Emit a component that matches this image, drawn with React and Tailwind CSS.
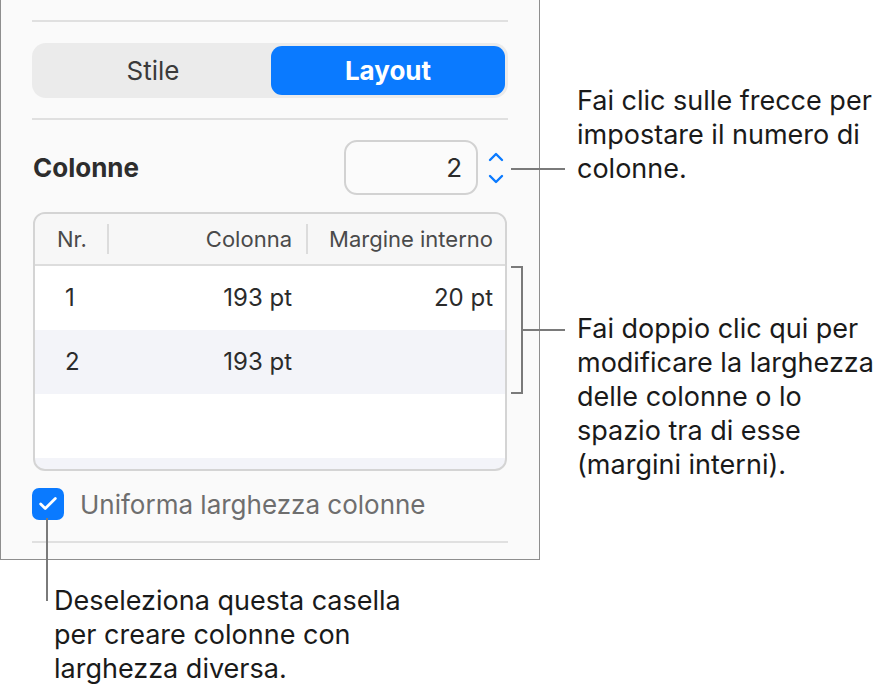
import { Check } from "lucide-react";

const font = { fontFamily: "Inter, 'Noto Sans', sans-serif" };

function Divider() {
  return <div className="h-[2px] bg-[#e0e0e0]" />;
}

function Stepper() {
  return (
    <svg width="18" height="40" viewBox="0 0 18 40" className="ml-[9px]">
      <path d="M3 12 L9 6 L15 12" fill="none" stroke="#0a7aff" strokeWidth="2.4" strokeLinecap="round" strokeLinejoin="round" />
      <path d="M3 28 L9 34 L15 28" fill="none" stroke="#0a7aff" strokeWidth="2.4" strokeLinecap="round" strokeLinejoin="round" />
    </svg>
  );
}

const rows = [
  { nr: "1", col: "193 pt", gap: "20 pt", bg: "bg-white" },
  { nr: "2", col: "193 pt", gap: "", bg: "bg-[#f3f4f9]" },
  { nr: "", col: "", gap: "", bg: "bg-white" },
];

function Panel() {
  return (
    <div className="w-[540px] h-[560px] shrink-0 border border-[#8e8e8e] border-t-0 bg-[#fafafa] pl-[31px] pr-[31px] pt-[20px]">
      <Divider />
      <div className="mt-[21px] h-[55px] rounded-[14px] bg-[#ebebeb] flex items-center p-[3px]">
        <div className="flex-1 text-center text-[26px] text-[#3a3a3a]">Stile</div>
        <div className="w-[234px] h-full rounded-[11px] bg-[#0a7aff] flex items-center justify-center text-[26px] font-bold text-white">
          Layout
        </div>
      </div>
      <div className="mt-[20px]">
        <Divider />
      </div>
      <div className="mt-[20px] flex items-center pr-[3px]">
        <div className="flex-1 pl-[1px] text-[26px] font-bold text-[#2d2d2d]">Colonne</div>
        <div className="w-[134px] h-[55px] rounded-[13px] border-2 border-[#d2d2d2] bg-[#fbfbfb] flex items-center justify-end pr-[14px] text-[26px] text-[#2b2b2b]">
          2
        </div>
        <Stepper />
      </div>
      <div className="mt-[17px] ml-[1px] mr-[1px] h-[259px] rounded-[12px] border-2 border-[#d4d4d4] overflow-hidden bg-[#f3f4f9] flex flex-col">
        <div className="h-[52px] shrink-0 bg-[#f7f7f7] border-b-2 border-[#dddddd] flex items-center text-[22px] text-[#4a4a4a]">
          <div className="w-[74px] pl-[22px] border-r-2 border-[#dcdcdc] h-[30px] flex items-center">Nr.</div>
          <div className="w-[199px] pr-[14px] border-r-2 border-[#dcdcdc] h-[30px] flex items-center justify-end">Colonna</div>
          <div className="flex-1 pr-[12px] text-right">Margine interno</div>
        </div>
        {rows.map((r, i) => (
          <div key={i} className={`h-[64px] shrink-0 flex items-center text-[24px] text-[#2b2b2b] ${r.bg}`}>
            <div className="w-[74px] pl-[30px]">{r.nr}</div>
            <div className="w-[199px] pr-[16px] text-right">{r.col}</div>
            <div className="flex-1 pr-[12px] text-right">{r.gap}</div>
          </div>
        ))}
      </div>
      <div className="mt-[17px] h-[32px] flex items-center">
        <div className="w-[32px] h-[32px] rounded-[7px] bg-[#0a7aff] flex items-center justify-center">
          <Check size={22} strokeWidth={3} color="white" />
        </div>
        <div className="ml-[16px] text-[26px] text-[#6e6e6e]">Uniforma larghezza colonne</div>
      </div>
      <div className="mt-[21px]">
        <Divider />
      </div>
    </div>
  );
}

export default function App() {
  return (
    <div className="relative w-[886px] h-[694px] bg-white overflow-hidden text-black" style={font}>
      <div className="flex">
        <Panel />
        <div className="pl-[37px] pt-[84px] text-[27px] leading-[34px] text-[#1a1a1a]">
          <p>
            Fai clic sulle frecce per
            <br />
            impostare il numero di
            <br />
            colonne.
          </p>
          <p className="mt-[126px]">
            Fai doppio clic qui per
            <br />
            modificare la larghezza
            <br />
            delle colonne o lo
            <br />
            spazio tra di esse
            <br />
            (margini interni).
          </p>
        </div>
      </div>
      <div className="pl-[54px] pt-[24px] text-[27px] leading-[34px] text-[#1a1a1a]">
        <p>
          Deseleziona questa casella
          <br />
          per creare colonne con
          <br />
          larghezza diversa.
        </p>
      </div>
      {/* callout lines */}
      <div className="absolute left-[511px] top-[168px] w-[54px] h-[2px] bg-[#7a7a7a]" />
      <div className="absolute left-[511px] top-[266px] w-[12px] h-[128px] border-2 border-l-0 border-[#7a7a7a]" />
      <div className="absolute left-[523px] top-[329px] w-[42px] h-[2px] bg-[#7a7a7a]" />
      <div className="absolute left-[46px] top-[518px] w-[2px] h-[83px] bg-[#7a7a7a]" />
    </div>
  );
}
